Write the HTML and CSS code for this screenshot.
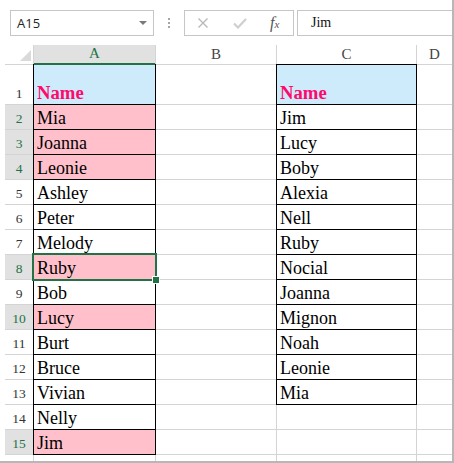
FILE: index.html
```html
<!DOCTYPE html>
<html lang="en">
<head>
    <meta charset="UTF-8">
    <title>Sheet</title>
    <link rel="stylesheet" href="styles.css">
</head>
<body>
    <div class="window">
        <!-- formula bar -->
        <div class="toolbar">
            <div class="name-box">
                <span>A15</span>
                <span class="caret"></span>
            </div>
            <div class="dots"><i></i><i></i><i></i></div>
            <div class="fn-box">
                <svg class="ico" width="12" height="12" viewBox="0 0 12 12">
                    <path d="M1.5 1.5 L10.5 10.5 M10.5 1.5 L1.5 10.5" stroke="#b9b9b9" stroke-width="1.4" fill="none"/>
                </svg>
                <svg class="ico ok" width="14" height="12" viewBox="0 0 14 12">
                    <path d="M1 6.5 L5 10.5 L13 2" stroke="#cfcfcf" stroke-width="2.2" fill="none"/>
                </svg>
                <span class="fx">f<small>x</small></span>
            </div>
            <div class="formula">Jim</div>
        </div>

        <!-- grid -->
        <div class="sheet">
            <div class="corner"><span></span></div>
            <div class="ch ch-sel">A</div>
            <div class="ch">B</div>
            <div class="ch">C</div>
            <div class="ch">D</div>

            <div class="rh">1</div>
            <div class="c box title">Name</div>
            <div class="c"></div>
            <div class="c box title">Name</div>
            <div class="c"></div>

            <div class="rh sel">2</div>
            <div class="c box pink">Mia</div>
            <div class="c"></div>
            <div class="c box">Jim</div>
            <div class="c"></div>

            <div class="rh sel">3</div>
            <div class="c box pink">Joanna</div>
            <div class="c"></div>
            <div class="c box">Lucy</div>
            <div class="c"></div>

            <div class="rh sel">4</div>
            <div class="c box pink">Leonie</div>
            <div class="c"></div>
            <div class="c box">Boby</div>
            <div class="c"></div>

            <div class="rh">5</div>
            <div class="c box">Ashley</div>
            <div class="c"></div>
            <div class="c box">Alexia</div>
            <div class="c"></div>

            <div class="rh">6</div>
            <div class="c box">Peter</div>
            <div class="c"></div>
            <div class="c box">Nell</div>
            <div class="c"></div>

            <div class="rh">7</div>
            <div class="c box">Melody</div>
            <div class="c"></div>
            <div class="c box">Ruby</div>
            <div class="c"></div>

            <div class="rh sel">8</div>
            <div class="c box pink active">Ruby</div>
            <div class="c"></div>
            <div class="c box">Nocial</div>
            <div class="c"></div>

            <div class="rh">9</div>
            <div class="c box">Bob</div>
            <div class="c"></div>
            <div class="c box">Joanna</div>
            <div class="c"></div>

            <div class="rh sel">10</div>
            <div class="c box pink">Lucy</div>
            <div class="c"></div>
            <div class="c box">Mignon</div>
            <div class="c"></div>

            <div class="rh">11</div>
            <div class="c box">Burt</div>
            <div class="c"></div>
            <div class="c box">Noah</div>
            <div class="c"></div>

            <div class="rh">12</div>
            <div class="c box">Bruce</div>
            <div class="c"></div>
            <div class="c box">Leonie</div>
            <div class="c"></div>

            <div class="rh">13</div>
            <div class="c box">Vivian</div>
            <div class="c"></div>
            <div class="c box">Mia</div>
            <div class="c"></div>

            <div class="rh">14</div>
            <div class="c box">Nelly</div>
            <div class="c"></div>
            <div class="c"></div>
            <div class="c"></div>

            <div class="rh sel">15</div>
            <div class="c box pink">Jim</div>
            <div class="c"></div>
            <div class="c"></div>
            <div class="c"></div>

            <div class="rh top">16</div>
            <div class="c"></div>
            <div class="c"></div>
            <div class="c"></div>
            <div class="c"></div>
        </div>
    </div>
</body>
</html>
```

FILE: styles.css
```css
:root {
    --grid-line: #d4d4d4;
    --excel-green: #217346;
    --head-gray: #e1e1e1;
}

* {
    box-sizing: border-box;
    margin: 0;
    padding: 0;
}

body {
    background: #fff;
    font-family: 'Liberation Serif', 'Times New Roman', serif;
}

.window {
    width: 454px;
    height: 463px;
    overflow: hidden;
    background: #fff;
    border-right: 2px solid #b7b7b7;
    border-bottom: 2px solid #b7b7b7;
}

/* formula bar */
.toolbar {
    display: flex;
    align-items: center;
    height: 26px;
    margin: 10px 0 9px 10px;
}

.name-box {
    width: 144px;
    height: 26px;
    border: 1px solid #c6c6c6;
    display: flex;
    align-items: center;
    justify-content: space-between;
    padding: 0 6px;
    font-family: 'Open Sans', 'Noto Sans', sans-serif;
    font-size: 13px;
    color: #262626;
}

.caret {
    width: 0;
    height: 0;
    border-left: 4px solid transparent;
    border-right: 4px solid transparent;
    border-top: 4px solid #7a7a7a;
}

.dots {
    width: 30px;
    display: flex;
    flex-direction: column;
    align-items: center;
    gap: 2px;
}

.dots i {
    width: 2px;
    height: 2px;
    background: #a6a6a6;
}

.fn-box {
    width: 110px;
    height: 26px;
    border: 1px solid #c6c6c6;
    display: flex;
    align-items: center;
    padding-left: 12px;
}

.ico.ok {
    margin-left: 24px;
}

.fx {
    margin-left: 23px;
    font-style: italic;
    font-size: 16px;
    color: #555;
}

.fx small {
    font-size: 11px;
}

.formula {
    flex: 1;
    height: 26px;
    margin-left: 3px;
    margin-right: -10px;
    border: 1px solid #c6c6c6;
    padding-left: 13px;
    display: flex;
    align-items: center;
    font-size: 14px;
    color: #111;
}

/* sheet */
.sheet {
    display: grid;
    grid-template-columns: 28px 121px 120px 139px 35px;
    grid-template-rows: 19px 39px repeat(15, 24px);
    gap: 1px;
    margin-left: 5px;
    background: var(--grid-line);
}

.corner {
    background: #fff;
    position: relative;
}

.corner span {
    position: absolute;
    right: 2px;
    bottom: 3px;
    width: 0;
    height: 0;
    border-left: 11px solid transparent;
    border-bottom: 11px solid #dadada;
}

.ch {
    background: #fff;
    color: #444;
    font-size: 15px;
    line-height: 1;
    display: flex;
    align-items: flex-end;
    justify-content: center;
    padding-bottom: 2px;
}

.ch-sel {
    background: var(--head-gray);
    color: var(--excel-green);
    border-bottom: 1px solid var(--excel-green);
    box-shadow: 0 1px 0 var(--excel-green);
    position: relative;
    z-index: 2;
}

.rh {
    background: #fff;
    color: #333;
    font-size: 13.5px;
    display: flex;
    align-items: flex-end;
    justify-content: center;
    padding-bottom: 2px;
}

.rh.top {
    align-items: flex-start;
    padding: 2px 0 0;
}

.rh.sel {
    background: var(--head-gray);
    color: var(--excel-green);
}

.c {
    background: #fff;
    color: #000;
    font-size: 18px;
    display: flex;
    align-items: flex-end;
    padding: 0 0 0 3px;
    white-space: nowrap;
}

.c.box {
    box-shadow: 0 0 0 1px #000;
}

.c.title {
    background: #cdebfb;
    color: #ff0a6c;
    font-weight: bold;
    font-size: 18.7px;
}

.c.pink {
    background: #ffc0cb;
}

.c.active {
    position: relative;
}

.c.active::after {
    content: '';
    position: absolute;
    inset: -2px;
    border: 2px solid var(--excel-green);
    z-index: 3;
}

.c.active::before {
    content: '';
    position: absolute;
    right: -5px;
    bottom: -5px;
    width: 6px;
    height: 6px;
    background: var(--excel-green);
    border: 1px solid #fff;
    z-index: 4;
}
```
